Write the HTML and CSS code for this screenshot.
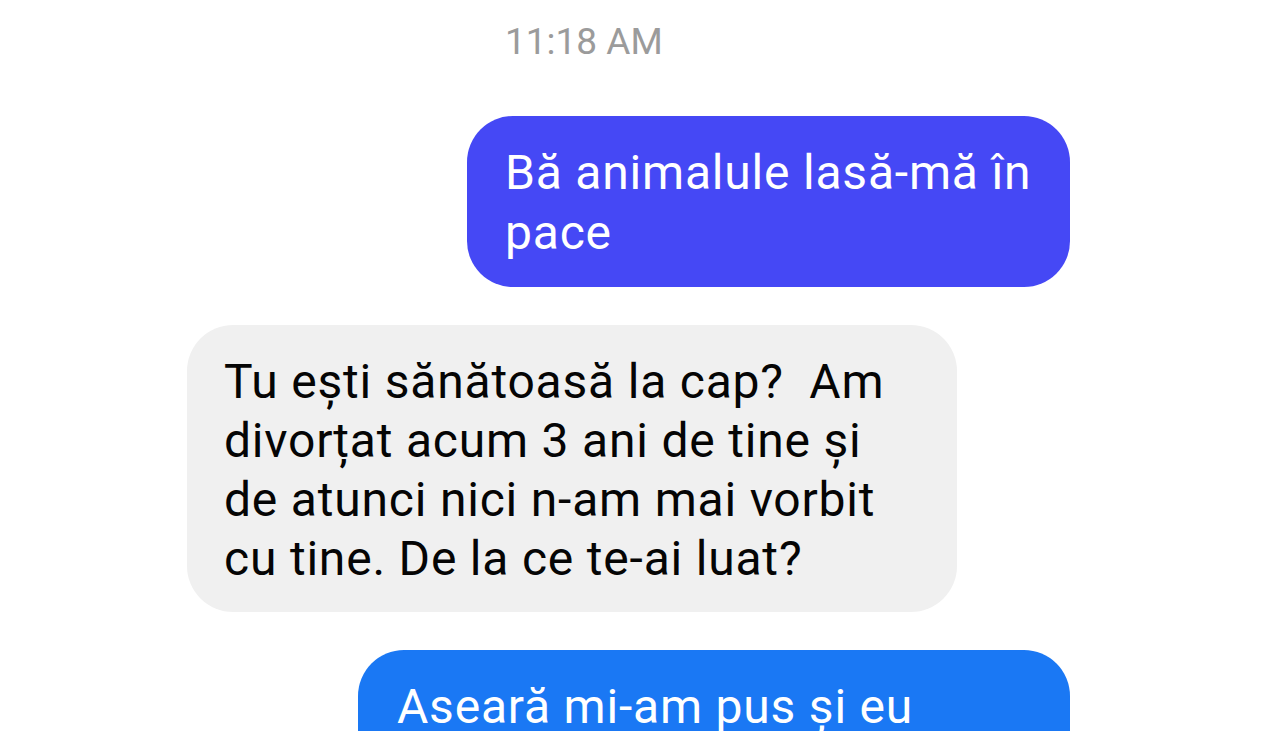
FILE: index.html
```html
<!DOCTYPE html>
<html lang="ro">
<head>
<meta charset="utf-8">
<title>Chat</title>
<link rel="stylesheet" href="styles.css">
</head>
<body>
<div class="chat">
  <div class="time">11:18 AM</div>
  <div class="row row-out">
    <div class="bubble bubble-out bubble-violet">Bă animalule lasă-mă în pace</div>
  </div>
  <div class="row row-in">
    <div class="bubble bubble-in">Tu ești sănătoasă la cap?&nbsp; Am divorțat acum 3 ani de tine și de atunci nici n-am mai vorbit cu tine. De la ce te-ai luat?</div>
  </div>
  <div class="row row-out">
    <div class="bubble bubble-out bubble-blue">Aseară mi-am pus și eu</div>
  </div>
</div>
</body>
</html>
```

FILE: styles.css
```css
html, body {
  margin: 0;
  padding: 0;
  background: #ffffff;
}
body {
  font-family: Roboto, "Noto Sans", "Liberation Sans", sans-serif;
  overflow: hidden;
  height: 731px;
}
.chat {
  display: flex;
  flex-direction: column;
  gap: 38px;
}
.time {
  margin-top: 18px;
  margin-left: 505px;
  font-size: 37px;
  line-height: 48px;
  color: #9b9b9b;
  margin-bottom: 12px;
}
.row {
  display: flex;
}
.row-out {
  justify-content: flex-end;
  padding-right: 210px;
}
.row-in {
  justify-content: flex-start;
  padding-left: 187px;
}
.bubble {
  box-sizing: border-box;
  font-size: 48px;
  letter-spacing: 0.8px;
  border-radius: 46px;
  padding: 27px 38px 24px;
}
.bubble-out {
  color: #ffffff;
  line-height: 60px;
}
.bubble-violet {
  background: #4548f5;
  width: 603px;
}
.bubble-blue {
  background: #1a78f4;
  width: 712px;
  padding-left: 39px;
  padding-bottom: 80px;
}
.bubble-in {
  background: #f0f0f0;
  color: #050505;
  width: 770px;
  line-height: 59px;
  padding-left: 37px;
}
```
